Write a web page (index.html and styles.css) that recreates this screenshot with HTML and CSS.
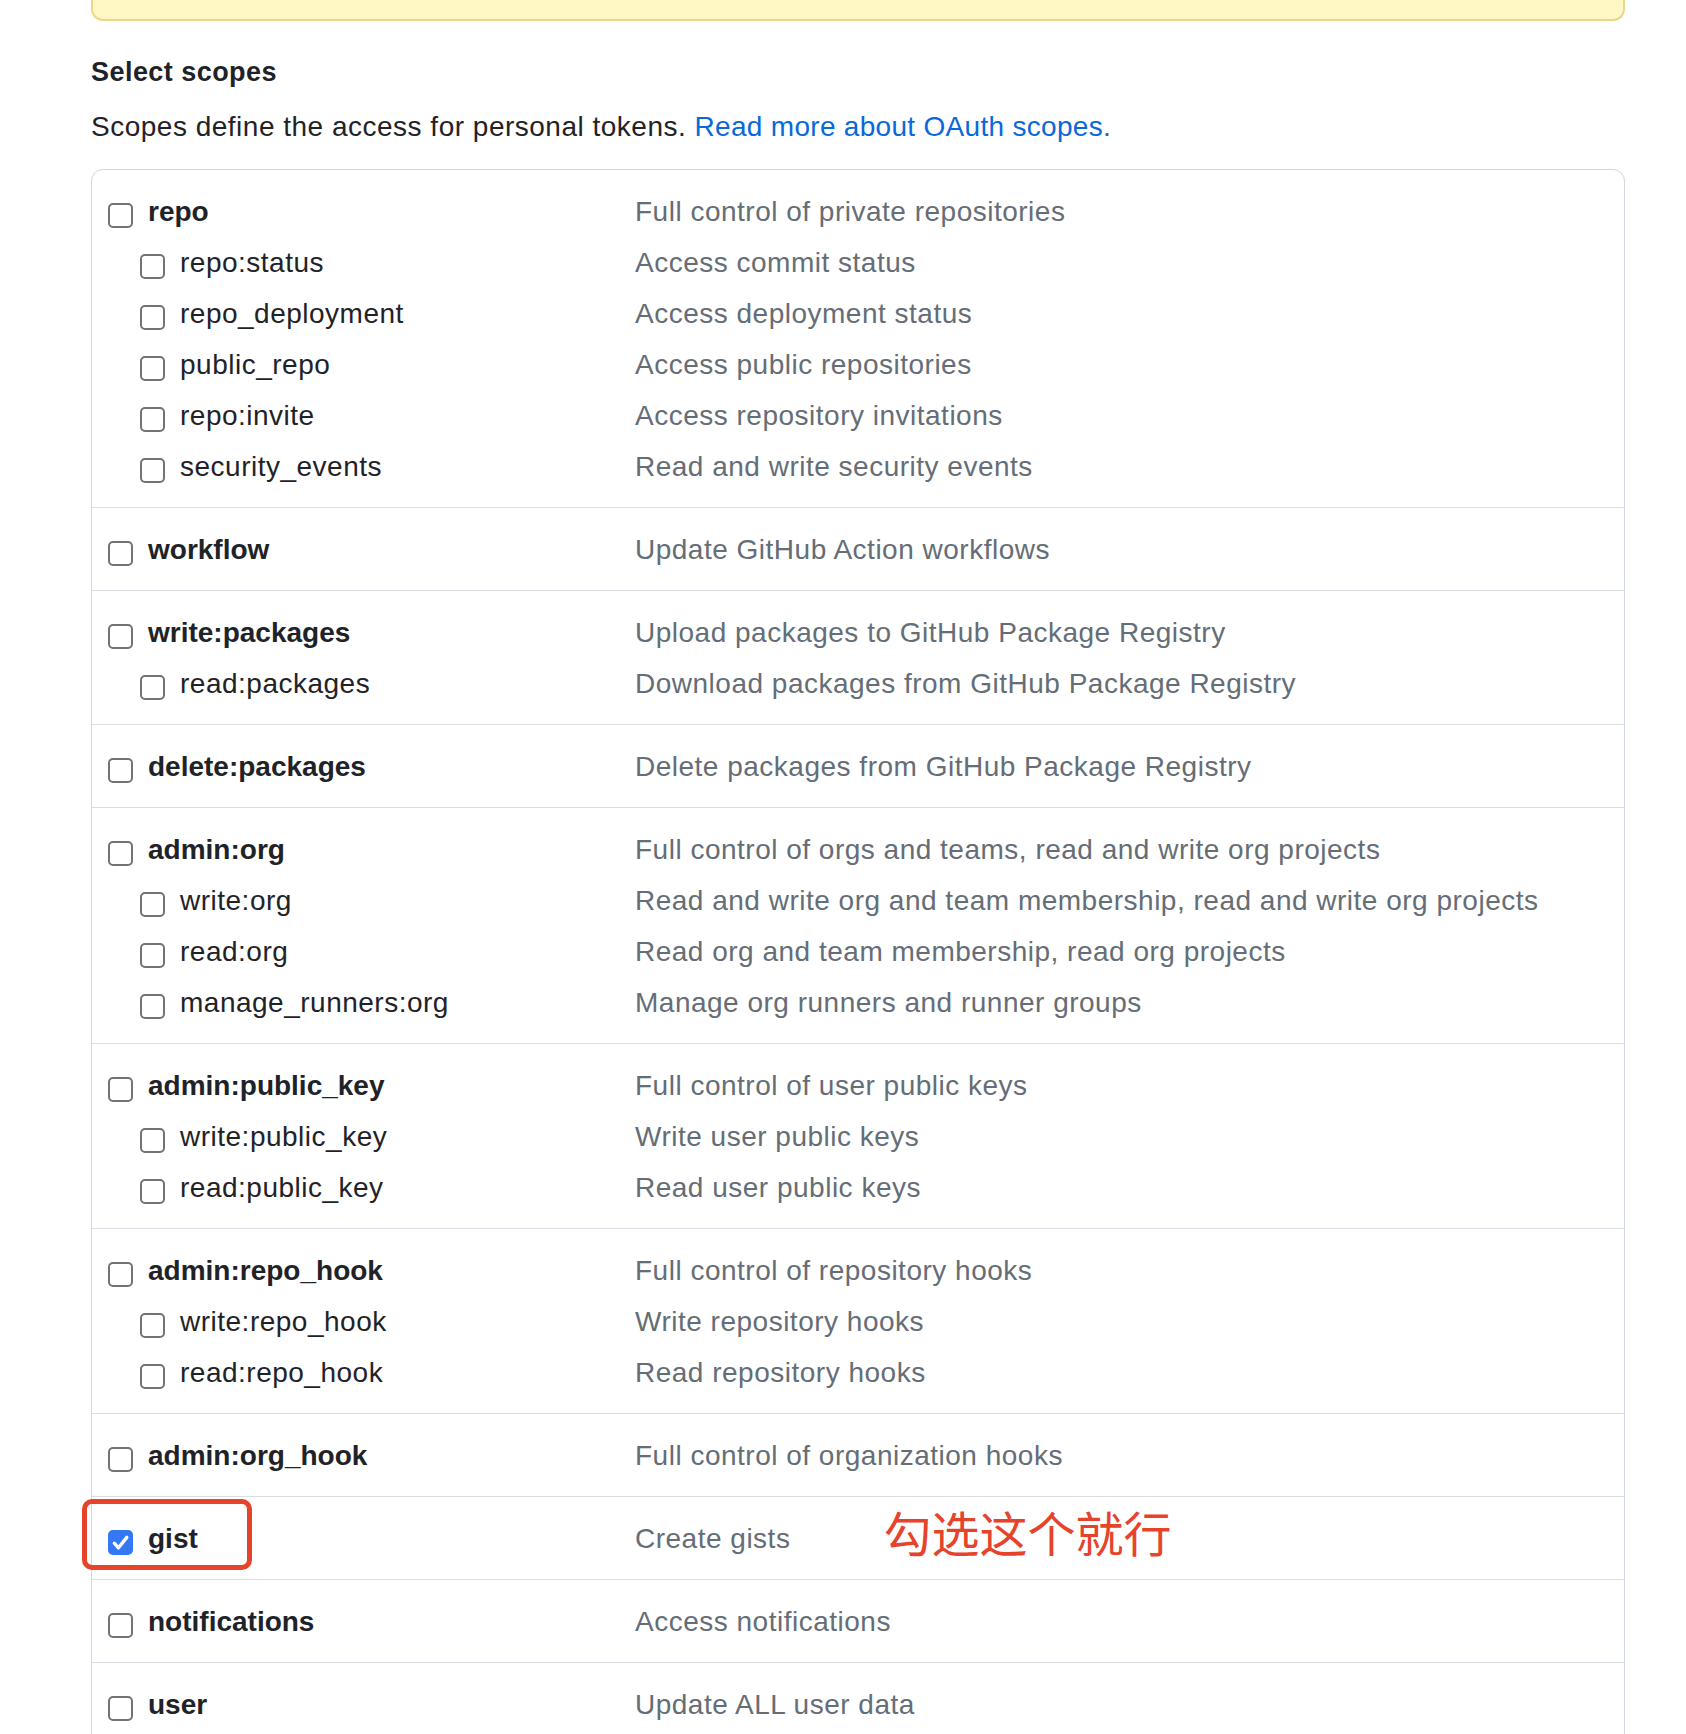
FILE: index.html
```html
<!DOCTYPE html>
<html lang="en">
<head>
<meta charset="utf-8">
<title>Select scopes</title>
<link rel="stylesheet" href="styles.css">
</head>
<body>
<div class="page">
  <div class="flash"></div>
  <h3 class="title">Select scopes</h3>
  <p class="lead">Scopes define the access for personal tokens. <a class="link" href="#">Read more about OAuth scopes.</a></p>

  <div class="scopes">
    <div class="group">
      <div class="row top"><div class="name"><span class="cb"></span><span class="label">repo</span></div><div class="desc">Full control of private repositories</div></div>
      <div class="row sub"><div class="name"><span class="cb"></span><span class="label">repo:status</span></div><div class="desc">Access commit status</div></div>
      <div class="row sub"><div class="name"><span class="cb"></span><span class="label">repo_deployment</span></div><div class="desc">Access deployment status</div></div>
      <div class="row sub"><div class="name"><span class="cb"></span><span class="label">public_repo</span></div><div class="desc">Access public repositories</div></div>
      <div class="row sub"><div class="name"><span class="cb"></span><span class="label">repo:invite</span></div><div class="desc">Access repository invitations</div></div>
      <div class="row sub"><div class="name"><span class="cb"></span><span class="label">security_events</span></div><div class="desc">Read and write security events</div></div>
    </div>
    <div class="group">
      <div class="row top"><div class="name"><span class="cb"></span><span class="label">workflow</span></div><div class="desc">Update GitHub Action workflows</div></div>
    </div>
    <div class="group">
      <div class="row top"><div class="name"><span class="cb"></span><span class="label">write:packages</span></div><div class="desc">Upload packages to GitHub Package Registry</div></div>
      <div class="row sub"><div class="name"><span class="cb"></span><span class="label">read:packages</span></div><div class="desc">Download packages from GitHub Package Registry</div></div>
    </div>
    <div class="group">
      <div class="row top"><div class="name"><span class="cb"></span><span class="label">delete:packages</span></div><div class="desc">Delete packages from GitHub Package Registry</div></div>
    </div>
    <div class="group">
      <div class="row top"><div class="name"><span class="cb"></span><span class="label">admin:org</span></div><div class="desc">Full control of orgs and teams, read and write org projects</div></div>
      <div class="row sub"><div class="name"><span class="cb"></span><span class="label">write:org</span></div><div class="desc">Read and write org and team membership, read and write org projects</div></div>
      <div class="row sub"><div class="name"><span class="cb"></span><span class="label">read:org</span></div><div class="desc">Read org and team membership, read org projects</div></div>
      <div class="row sub"><div class="name"><span class="cb"></span><span class="label">manage_runners:org</span></div><div class="desc">Manage org runners and runner groups</div></div>
    </div>
    <div class="group">
      <div class="row top"><div class="name"><span class="cb"></span><span class="label">admin:public_key</span></div><div class="desc">Full control of user public keys</div></div>
      <div class="row sub"><div class="name"><span class="cb"></span><span class="label">write:public_key</span></div><div class="desc">Write user public keys</div></div>
      <div class="row sub"><div class="name"><span class="cb"></span><span class="label">read:public_key</span></div><div class="desc">Read user public keys</div></div>
    </div>
    <div class="group">
      <div class="row top"><div class="name"><span class="cb"></span><span class="label">admin:repo_hook</span></div><div class="desc">Full control of repository hooks</div></div>
      <div class="row sub"><div class="name"><span class="cb"></span><span class="label">write:repo_hook</span></div><div class="desc">Write repository hooks</div></div>
      <div class="row sub"><div class="name"><span class="cb"></span><span class="label">read:repo_hook</span></div><div class="desc">Read repository hooks</div></div>
    </div>
    <div class="group">
      <div class="row top"><div class="name"><span class="cb"></span><span class="label">admin:org_hook</span></div><div class="desc">Full control of organization hooks</div></div>
    </div>
    <div class="group">
      <div class="mark"></div>
      <div class="row top"><div class="name"><span class="cb checked"><svg viewBox="0 0 25 25" width="25" height="25"><path d="M6.3 13.2 L10.5 17.8 L18.8 7.4" fill="none" stroke="#fff" stroke-width="3.4" stroke-linecap="round" stroke-linejoin="round"/></svg></span><span class="label">gist</span></div><div class="desc note-row"><span>Create gists</span><span class="note">勾选这个就行</span></div></div>
    </div>
    <div class="group">
      <div class="row top"><div class="name"><span class="cb"></span><span class="label">notifications</span></div><div class="desc">Access notifications</div></div>
    </div>
    <div class="group">
      <div class="row top"><div class="name"><span class="cb"></span><span class="label">user</span></div><div class="desc">Update ALL user data</div></div>
    </div>
  </div>
</div>
</body>
</html>
```
FILE: styles.css
```css
* { box-sizing: border-box; }

body {
  margin: 0;
  background: #ffffff;
  color: #1f2328;
  font-family: "Liberation Sans", Arial, sans-serif;
}

.page {
  width: 1534px;
  margin-left: 91px;
}

.flash {
  height: 21px;
  background: #fff8c5;
  border: 2px solid #ecd68a;
  border-top: 0;
  border-radius: 0 0 12px 12px;
}

.title {
  margin: 32px 0 0;
  font-size: 27px;
  line-height: 39px;
  font-weight: 700;
  letter-spacing: 0.45px;
  color: #1f2328;
}

.lead {
  margin: 14px 0 0;
  font-size: 28px;
  line-height: 42px;
  letter-spacing: 0.5px;
  color: #1f2328;
}

.link {
  color: #0969da;
  text-decoration: none;
  letter-spacing: 0.3px;
}

.scopes {
  margin-top: 21px;
  border: 1px solid #d0d7de;
  border-radius: 12px;
}

.group {
  position: relative;
  padding: 16px 0 15px;
  border-top: 1px solid #d8dee4;
}

.group:first-child {
  border-top: 0;
}

.row {
  display: grid;
  grid-template-columns: 543px 1fr;
  height: 51px;
  font-size: 28px;
  line-height: 51px;
  letter-spacing: 0.5px;
  white-space: nowrap;
}

.name {
  display: flex;
  align-items: flex-start;
  gap: 15px;
  padding-left: 16px;
}

.sub .name {
  padding-left: 48px;
}

.cb {
  flex: none;
  width: 25px;
  height: 25px;
  margin-top: 17px;
  border: 2px solid #737373;
  border-radius: 5px;
  background: #ffffff;
}

.cb.checked {
  border: 0;
  background: #3478f6;
}

.cb svg {
  display: block;
}

.top .label {
  font-weight: 700;
  letter-spacing: 0;
}

.desc {
  color: #656d76;
}

.note-row {
  display: flex;
  align-items: flex-start;
}

.note {
  margin-left: 93px;
  margin-top: -6px;
  font-family: "Noto Sans CJK SC", sans-serif;
  font-size: 48px;
  line-height: 48px;
  letter-spacing: 0;
  color: #e6432b;
}

.mark {
  position: absolute;
  left: -10px;
  top: 2px;
  width: 170px;
  height: 71px;
  border: 5px solid #e6432b;
  border-radius: 10px;
}
```
